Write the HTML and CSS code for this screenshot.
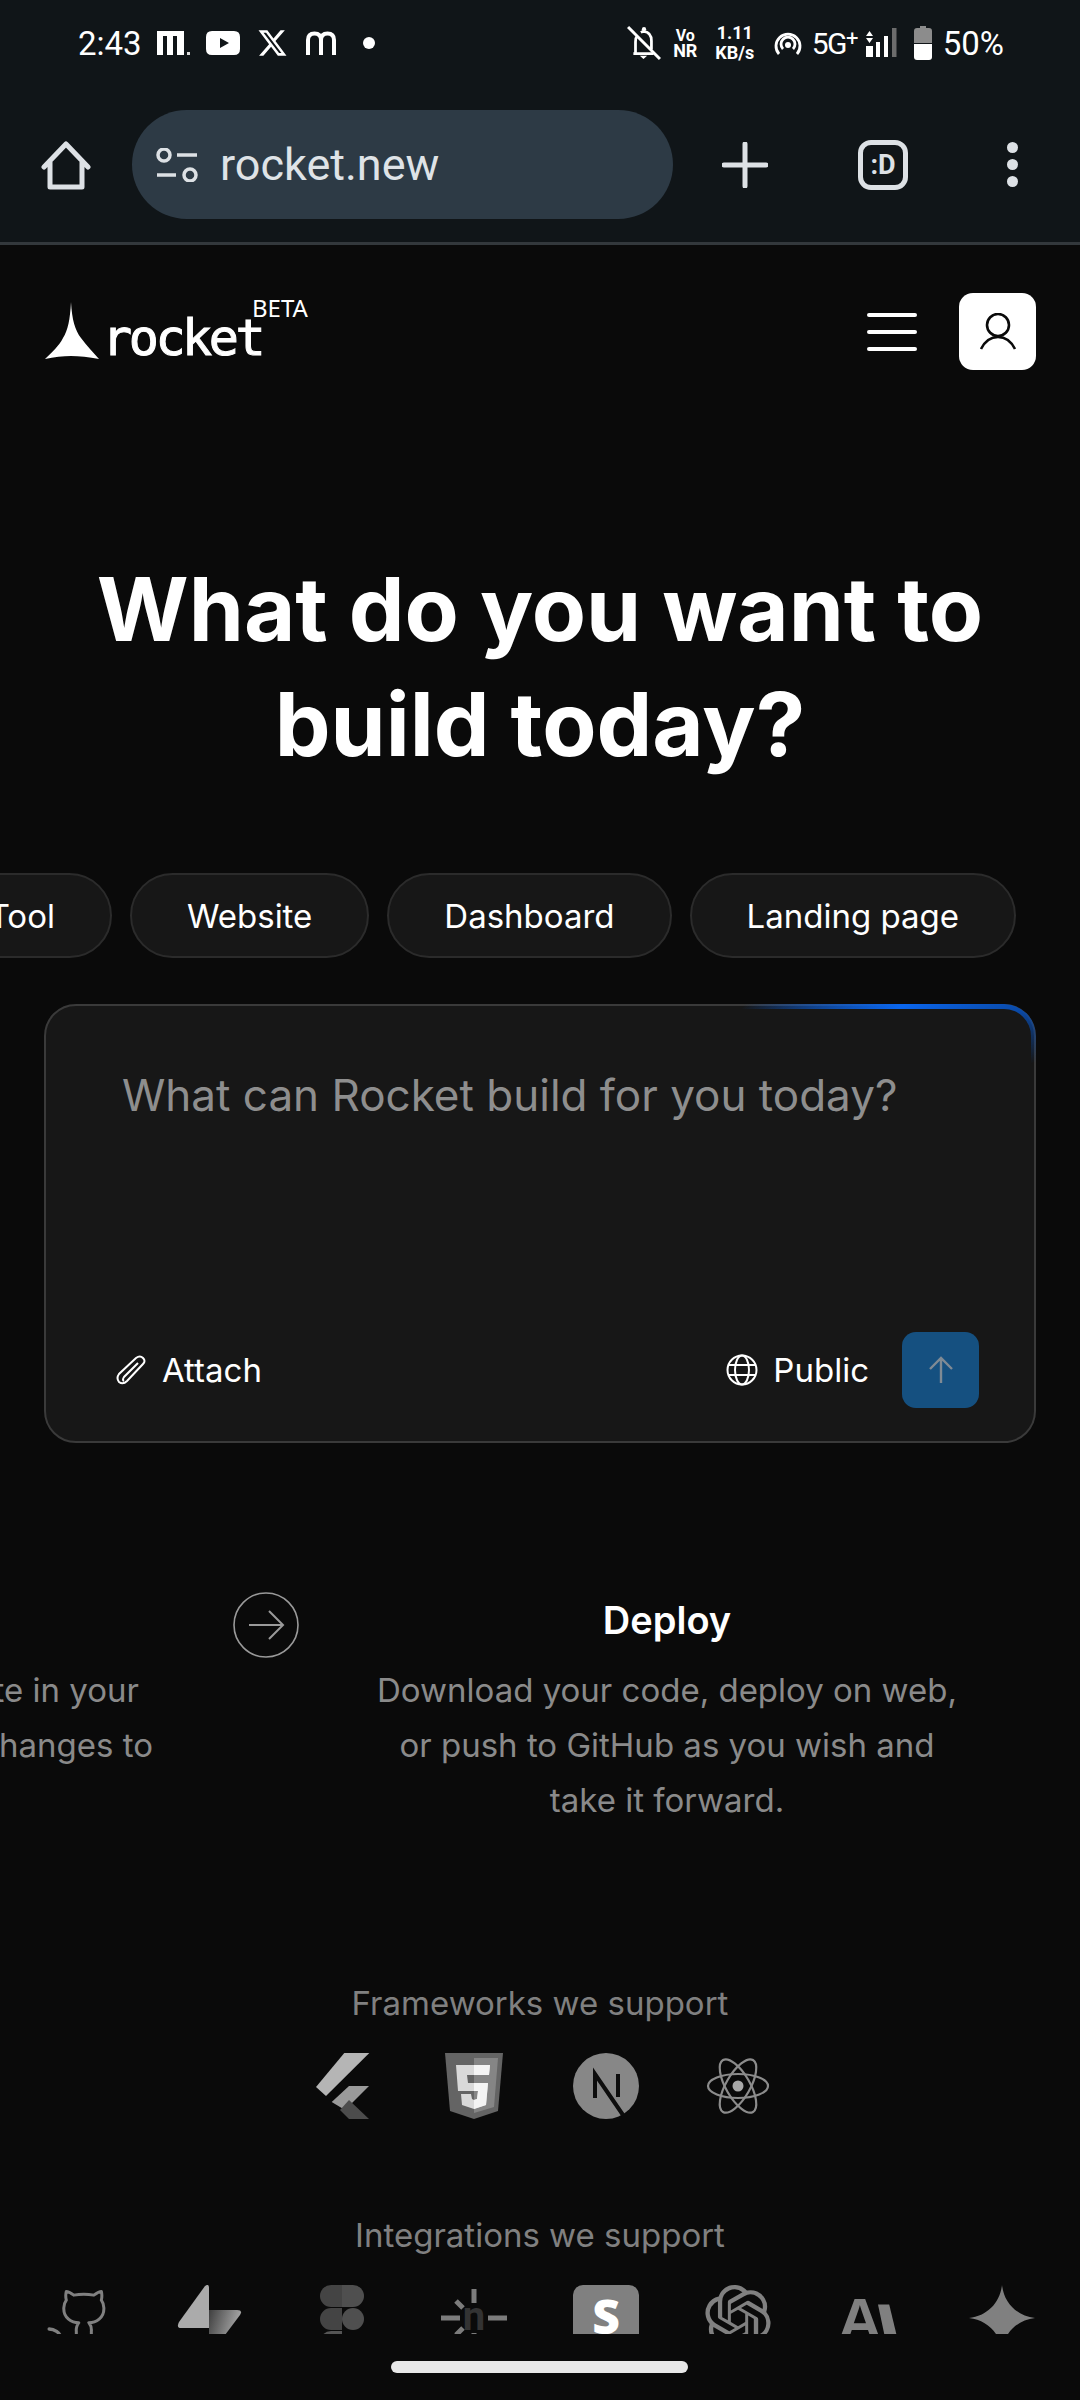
FILE: index.html
```html
<!DOCTYPE html>
<html lang="en">
<head>
<meta charset="utf-8">
<title>rocket.new</title>
<link rel="stylesheet" href="styles.css">
</head>
<body>
<div class="chrome">
  <div class="status">
    <div class="status-left">
      <span class="time">2:43</span>
      <svg class="si-m1" viewBox="0 0 34 24"><path d="M0 0H27V24H20V5H16V24H10V5H6V24H0Z" fill="#fff"/><rect x="30" y="21" width="3" height="3" fill="#ddd"/></svg>
      <svg class="si-yt" viewBox="0 0 34 24"><path fill-rule="evenodd" d="M6 0H28Q34 0 34 6V18Q34 24 28 24H6Q0 24 0 18V6Q0 0 6 0ZM14 7V17L23 12Z" fill="#fff"/></svg>
      <svg class="si-x" viewBox="0 0 24 24"><path d="M18.901 1.153h3.68l-8.04 9.19L24 22.846h-7.406l-5.8-7.584-6.638 7.584H.474l8.6-9.83L0 1.154h7.594l5.243 6.932ZM17.61 20.644h2.039L6.486 3.24H4.298Z" fill="#fff"/></svg>
      <svg class="si-m2" viewBox="0 0 30 24"><path d="M2 24V9Q2 2.500 8.500 2.500T15 9V24M15 9Q15 2.500 21.500 2.500T28 9V24" fill="none" stroke="#fff" stroke-width="4"/></svg>
      <span class="dot"></span>
    </div>
    <div class="status-right">
      <svg class="si-bell" viewBox="0 0 32 32"><path d="M6 26H25M8 25V15Q8 11 10 9M13 6Q15 5 16 5Q23 6 23 14V22" fill="none" stroke="#fff" stroke-width="2.600"/><circle cx="16" cy="3" r="2" fill="#fff"/><path d="M12 28H19L15.500 31Z" fill="#fff"/><path d="M1 1L31 31" stroke="#fff" stroke-width="2.800"/></svg>
      <span class="volte"><span class="vo">Vo</span><span>NR</span></span>
      <span class="speed"><span>1.11</span><span>KB/s</span></span>
      <svg class="si-hot" viewBox="0 0 28 24"><path d="M5 23A12 12 0 1 1 23 23" fill="none" stroke="#fff" stroke-width="2.800"/><path d="M9 18A7 7 0 1 1 19 18" fill="none" stroke="#fff" stroke-width="2.800"/><circle cx="14" cy="14" r="3" fill="#fff"/></svg>
      <span class="net">5G<sup>+</sup></span>
      <svg class="si-sig" viewBox="0 0 32 30"><path d="M1 8L4.500 3L8 8ZM1 10L4.500 15L8 10Z" fill="#fff"/><rect x="1" y="18" width="7" height="11" fill="#fff"/><rect x="11" y="14" width="4" height="15" fill="#fff"/><rect x="19" y="8" width="4" height="21" fill="#fff"/><rect x="27" y="0" width="4.500" height="29" fill="#6c6c6c"/></svg>
      <svg class="si-bat" viewBox="0 0 18 34"><path d="M6 0H12V2H15Q18 2 18 5V17H0V5Q0 2 3 2H6Z" fill="#8c8c8c"/><path d="M0 18H18V31Q18 34 15 34H3Q0 34 0 31Z" fill="#fff"/></svg>
      <span class="pct">50%</span>
    </div>
  </div>
  <div class="toolbar">
    <svg class="ic-home" viewBox="0 0 50 50"><path d="M3 26L25 3L47 26M9 20V46H41V20" fill="none" stroke="#dde1e5" stroke-width="5" stroke-linejoin="round" stroke-linecap="round"/></svg>
    <div class="omnibox">
      <svg class="ic-tune" viewBox="0 0 42 34"><circle cx="8" cy="7" r="6" fill="none" stroke="#dde1e5" stroke-width="3.500"/><path d="M21 7H41M1 27H20" stroke="#dde1e5" stroke-width="3.500"/><circle cx="34" cy="27" r="6" fill="none" stroke="#dde1e5" stroke-width="3.500"/></svg>
      <span class="url">rocket.new</span>
    </div>
    <svg class="ic-plus" viewBox="0 0 46 46"><path d="M23 2V44M2 23H44" stroke="#dde1e5" stroke-width="5" stroke-linecap="round"/></svg>
    <div class="tabs"><span>:D</span></div>
    <div class="kebab"><i></i><i></i><i></i></div>
  </div>
</div>

<main class="page">
  <header class="site-head">
    <div class="logo">
      <svg class="logo-mark" viewBox="0 0 54 58"><path d="M26 0C27 18 30 28 36 36C42 44 48 50 54 57C44 55 34 54 26 54C18 54 9 55 0 57C7 50 14 44 18 36C23 28 25 18 26 0Z" fill="#fff"/></svg>
      <span class="logo-word">rocket</span>
      <span class="beta">BETA</span>
    </div>
    <div class="head-actions">
      <div class="burger"><i></i><i></i><i></i></div>
      <div class="avatar">
        <svg viewBox="0 0 38 38"><circle cx="19" cy="12" r="11" fill="none" stroke="#0a0a0a" stroke-width="2.600"/><path d="M2 36C6 28 12 24 19 24S32 28 36 36" fill="none" stroke="#0a0a0a" stroke-width="2.600"/></svg>
      </div>
    </div>
  </header>

  <h1 class="headline">What do you want to<br>build today?</h1>

  <div class="chips">
    <span class="chip">Tool</span>
    <span class="chip">Website</span>
    <span class="chip">Dashboard</span>
    <span class="chip">Landing page</span>
  </div>

  <section class="prompt">
    <p class="placeholder">What can Rocket build for you today?</p>
    <div class="prompt-foot">
      <div class="action">
        <svg class="ic-clip" viewBox="0 0 30 30"><path d="M27 9L11 26Q7 30 3 27Q0 23 3 19L20 3Q24 0 27 3Q30 6 27 9" fill="none" stroke="#fff" stroke-width="2"/><path d="M22 8L8 22Q6 25 8 26" fill="none" stroke="#fff" stroke-width="2"/></svg>
        <span>Attach</span>
      </div>
      <div class="foot-right">
        <div class="action action-public">
          <svg class="ic-globe" viewBox="0 0 32 32"><circle cx="16" cy="16" r="14.500" fill="none" stroke="#fff" stroke-width="2"/><ellipse cx="16" cy="16" rx="7" ry="14.500" fill="none" stroke="#fff" stroke-width="2"/><path d="M3 11H29M3 21H29" stroke="#fff" stroke-width="2"/></svg>
          <span>Public</span>
        </div>
        <div class="send">
          <svg viewBox="0 0 26 28"><path d="M13 27V2M2 13L13 2L24 13" fill="none" stroke="#7f8a94" stroke-width="2.400"/></svg>
        </div>
      </div>
    </div>
  </section>

  <section class="steps">
    <div class="step-prev">
      <span class="prev-line prev-first">te in your</span>
      <span class="prev-line">hanges to</span>
    </div>
    <div class="step-arrow">
      <svg viewBox="0 0 66 66"><circle cx="33" cy="33" r="32" fill="none" stroke="#9a9a9a" stroke-width="1.600"/><path d="M16 33H50M36 19L50 33L36 47" fill="none" stroke="#9a9a9a" stroke-width="2"/></svg>
    </div>
    <div class="step">
      <h2>Deploy</h2>
      <p>Download your code, deploy on web,<br>or push to GitHub as you wish and<br>take it forward.</p>
    </div>
  </section>

  <section class="support support-frameworks">
    <h3>Frameworks we support</h3>
    <div class="logos logos-fw">
      <svg viewBox="0 0 66 66"><path d="M35.300 0H60.300L17 43L7 34Z" fill="#b5b5b5"/><path d="M40 33H60L36 57L22.700 49Z" fill="#9a9a9a"/><path d="M31 57L40 47L60 66H40Z" fill="#4c4c4c"/></svg>
      <svg viewBox="0 0 66 66"><path d="M4 0H62L57 58L33 66L9 58Z" fill="#646464"/><path d="M33 5H57L53 54L33 60Z" fill="#858585"/><path d="M15 12H49L48 22H26L27 30H47L45 52L33 56L21 52L20 41H30L31 46L33 47L36 46L37 38H17Z" fill="#d9d9d9"/><path d="M33 12H49L48 22H33ZM33 30H47L45 52L33 56V47L36 46L37 38H33Z" fill="#f4f4f4"/></svg>
      <svg viewBox="0 0 66 66"><circle cx="33" cy="33" r="33" fill="#878787"/><path d="M22 45V21L50 62" fill="none" stroke="#0d0d0d" stroke-width="4"/><path d="M45 21V44" stroke="#0d0d0d" stroke-width="4"/></svg>
      <svg viewBox="0 0 66 66"><g fill="none" stroke="#8c8c8c" stroke-width="2.200"><ellipse cx="33" cy="33" rx="30" ry="12"/><ellipse cx="33" cy="33" rx="30" ry="12" transform="rotate(60 33 33)"/><ellipse cx="33" cy="33" rx="30" ry="12" transform="rotate(120 33 33)"/></g><circle cx="33" cy="33" r="5.500" fill="#a8a8a8"/></svg>
    </div>
  </section>

  <section class="support support-integrations">
    <h3>Integrations we support</h3>
    <div class="logos logos-int">
      <svg viewBox="0 0 24 24"><g fill="none" stroke="#808080" stroke-width="1.200" stroke-linecap="round" stroke-linejoin="round"><g transform="translate(3.200 .5) scale(.91)"><path d="M15 22v-4a4.800 4.800 0 0 0-1-3.500c3 0 6-2 6-5.500.08-1.250-.27-2.480-1-3.500.28-1.150.28-2.350 0-3.500 0 0-1 0-3 1.500-2.640-.5-5.360-.5-8 0C6 2 5 2 5 2c-.3 1.150-.3 2.350 0 3.500A5.403 5.403 0 0 0 4 9c0 3.500 3 5.500 6 5.500-.39.490-.68 1.050-.85 1.650-.17.6-.22 1.230-.15 1.850v4"/></g><path d="M6 20c-.3-3-3-4-4.500-4"/></g></svg>
      <svg viewBox="0 0 66 66"><defs><linearGradient id="sb" x1="0" y1="0" x2="1" y2="0.400"><stop offset="0" stop-color="#3f3f3f"/><stop offset="1" stop-color="#b0b0b0"/></linearGradient></defs><path d="M28 1Q32-2 32 3V43H4Q-1 43 2 37Z" fill="#ababab"/><path d="M32 25H60Q66 25 63 30L36 66H32Z" fill="url(#sb)"/></svg>
      <svg viewBox="0 0 66 66"><path d="M33 0H22A11 11 0 0 0 22 22H33Z" fill="#444"/><path d="M33 0H44A11 11 0 0 1 44 22H33Z" fill="#4f4f4f"/><path d="M33 23H22A11 11 0 0 0 22 45H33Z" fill="#444"/><circle cx="44" cy="34" r="11" fill="#4f4f4f"/><path d="M33 46H22A11 11 0 1 0 33 57Z" fill="#555"/></svg>
      <div class="spark">
        <svg viewBox="0 0 66 66"><path d="M33 4V18M0 33H19M47 33H66M15 16L22 23M15 50L22 43M33 48V62" stroke="#7c7c7c" stroke-width="5"/></svg>
        <span>n</span>
      </div>
      <div class="s-tile">S</div>
      <svg viewBox="0 0 24 24"><path d="M22.2819 9.8211a5.9847 5.9847 0 0 0-.5157-4.9108 6.0462 6.0462 0 0 0-6.5098-2.9A6.0651 6.0651 0 0 0 4.9807 4.1818a5.9847 5.9847 0 0 0-3.9977 2.9 6.0462 6.0462 0 0 0 .7427 7.0966 5.98 5.98 0 0 0 .511 4.9107 6.051 6.051 0 0 0 6.5146 2.9001A5.9847 5.9847 0 0 0 13.2599 24a6.0557 6.0557 0 0 0 5.7718-4.2058 5.9894 5.9894 0 0 0 3.9977-2.9001 6.0557 6.0557 0 0 0-.7475-7.0729zm-9.022 12.6081a4.4755 4.4755 0 0 1-2.8764-1.0408l.1419-.0804 4.7783-2.7582a.7948.7948 0 0 0 .3927-.6813v-6.7369l2.02 1.1686a.071.071 0 0 1 .038.052v5.5826a4.504 4.504 0 0 1-4.4945 4.4944zm-9.6607-4.1254a4.4708 4.4708 0 0 1-.5346-3.0137l.142.0852 4.783 2.7582a.7712.7712 0 0 0 .7806 0l5.8428-3.3685v2.3324a.0804.0804 0 0 1-.0332.0615L9.74 19.9502a4.4992 4.4992 0 0 1-6.1408-1.6464zM2.3408 7.8956a4.485 4.485 0 0 1 2.3655-1.9728V11.6a.7664.7664 0 0 0 .3879.6765l5.8144 3.3543-2.0201 1.1685a.0757.0757 0 0 1-.071 0l-4.8303-2.7865A4.504 4.504 0 0 1 2.3408 7.872zm16.5963 3.8558L13.1038 8.364 15.1192 7.2a.0757.0757 0 0 1 .071 0l4.8303 2.7913a4.4944 4.4944 0 0 1-.6765 8.1042v-5.6772a.79.79 0 0 0-.407-.667zm2.0107-3.0231l-.142-.0852-4.7735-2.7818a.7759.7759 0 0 0-.7854 0L9.409 9.2297V6.8974a.0662.0662 0 0 1 .0284-.0615l4.8303-2.7866a4.4992 4.4992 0 0 1 6.6802 4.66zM8.3065 12.863l-2.02-1.1638a.0804.0804 0 0 1-.038-.0567V6.0742a4.4992 4.4992 0 0 1 7.3757-3.4537l-.142.0805L8.704 5.459a.7948.7948 0 0 0-.3927.6813zm1.0976-2.3654l2.602-1.4998 2.6069 1.4998v2.9994l-2.5974 1.4997-2.6067-1.4997Z" fill="#808080"/></svg>
      <div class="anth">
        <span>A</span>
        <svg viewBox="0 0 30 66"><path d="M0 0H14L30 66H14Z" fill="#808080"/></svg>
      </div>
      <svg viewBox="0 0 66 66"><path d="M33 0C35 18 48 31 66 33C48 35 35 48 33 66C31 48 18 35 0 33C18 31 31 18 33 0Z" fill="#808080"/></svg>
    </div>
  </section>

  <div class="home-bar"></div>
</main>
</body>
</html>
```

FILE: styles.css
```css
* { box-sizing: border-box; }
html, body { margin: 0; padding: 0; }
body {
  width: 1080px;
  height: 2400px;
  overflow: hidden;
  background: #0a0a0a;
  font-family: "Inter", "Liberation Sans", sans-serif;
  color: #fff;
}
svg { display: block; flex: none; }

/* system + browser chrome */
.chrome { background: #101518; border-bottom: 3px solid #33383c; height: 245px; }
.status {
  height: 86px;
  display: flex;
  align-items: center;
  justify-content: space-between;
  padding: 0 76px 0 78px;
  font-family: "Roboto", sans-serif;
}
.status-left, .status-right { display: flex; align-items: center; }
.time { font-size: 33px; margin-right: 15px; }
.si-m1 { width: 34px; height: 24px; margin-right: 15px; }
.si-yt { width: 34px; height: 24px; margin-right: 18px; }
.si-x { width: 29px; height: 28px; margin-right: 19px; }
.si-m2 { width: 30px; height: 24px; margin-right: 27px; }
.dot { width: 12px; height: 12px; border-radius: 50%; background: #fff; }
.si-bell { width: 34px; height: 34px; margin-right: 14px; }
.volte { display: flex; flex-direction: column; align-items: center; width: 21px; font-size: 18px; line-height: 15px; font-weight: 700; margin-right: 18px; }
.vo { font-size: 16px; }
.speed { display: flex; flex-direction: column; align-items: center; width: 42px; font-size: 18px; line-height: 20px; font-weight: 700; margin-right: 18px; white-space: nowrap; }
.si-hot { width: 28px; height: 24px; margin-right: 10px; }
.net { font-size: 30px; letter-spacing: -1.500px; width: 46px; margin-right: 7px; white-space: nowrap; display: block; }
.net sup { font-size: 22px; line-height: 0; vertical-align: 8px; }
.si-sig { width: 32px; height: 30px; margin-right: 17px; }
.si-bat { width: 18px; height: 34px; margin-right: 11px; }
.pct { font-size: 33px; }

.toolbar { height: 156px; padding: 24px 0 0 41px; display: flex; align-items: flex-start; }
.ic-home { width: 50px; height: 50px; margin: 31px 41px 0 0; }
.omnibox {
  width: 541px;
  height: 109px;
  border-radius: 55px;
  background: #2d3a45;
  display: flex;
  align-items: center;
  padding-left: 24px;
}
.ic-tune { width: 42px; height: 34px; margin-right: 22px; }
.url { font-family: "Roboto", sans-serif; font-size: 45px; color: #dfe3e7; }
.ic-plus { width: 46px; height: 46px; margin: 32px 0 0 49px; }
.tabs {
  width: 50px; height: 50px; margin: 30px 0 0 90px;
  border: 5px solid #dde1e5; border-radius: 13px;
  display: flex; align-items: center; justify-content: center;
  font-family: "Roboto", sans-serif; font-weight: 700; font-size: 27px; color: #dde1e5;
}
.kebab { display: flex; flex-direction: column; gap: 6px; margin: 32px 0 0 99px; }
.kebab i { width: 11px; height: 11px; border-radius: 50%; background: #dde1e5; }

/* header */
.page { height: 2155px; position: relative; overflow: hidden; }
.site-head { display: flex; justify-content: space-between; align-items: flex-start; padding: 48px 44px 0 45px; }
.logo { position: relative; display: flex; align-items: flex-end; height: 67px; }
.logo-mark { width: 54px; height: 58px; margin-right: 3px; }
.logo-word { font-family: "DejaVu Sans Mono", monospace; font-weight: 400; -webkit-text-stroke: 1px #fff; font-size: 50px; line-height: 50px; letter-spacing: -3.400px; height: 50px; margin-bottom: -3px; }
.beta { position: absolute; left: 207px; top: 2px; font-family: "Noto Sans", sans-serif; font-size: 24px; line-height: 26px; }
.head-actions { display: flex; align-items: center; gap: 42px; }
.burger { display: flex; flex-direction: column; gap: 13px; }
.burger i { width: 50px; height: 4px; border-radius: 2px; background: #fff; }
.avatar { width: 77px; height: 77px; border-radius: 14px; background: #fff; display: flex; align-items: center; justify-content: center; }
.avatar svg { width: 38px; height: 38px; }

.headline { margin: 181px 0 0; text-align: center; font-size: 88.600px; line-height: 115px; font-weight: 700; }

/* chips */
.chips { display: flex; justify-content: flex-end; gap: 18px; padding-right: 64px; margin-top: 92px; }
.chip {
  flex: none;
  height: 85px;
  padding: 0 55px;
  display: flex; align-items: center;
  border: 2px solid #2b2b2b;
  border-radius: 43px;
  background: #171717;
  font-size: 33px;
}

/* prompt */
.prompt {
  position: relative;
  margin: 46px 44px 0;
  height: 439px;
  border: 2px solid #3a3a3a;
  border-radius: 32px;
  background: #171717;
  padding: 0 55px 33px 70px;
  display: flex;
  flex-direction: column;
  justify-content: space-between;
}
.prompt::before {
  content: "";
  position: absolute;
  inset: -2px;
  padding: 5px;
  border-radius: 32px;
  background: conic-gradient(from 43deg at 50% 50%, transparent 0deg, #0a66ee 16deg, #0a4aa8 23deg, transparent 29deg, transparent 360deg);
  -webkit-mask: linear-gradient(#000 0 0) content-box, linear-gradient(#000 0 0);
  -webkit-mask-composite: xor;
  mask-composite: exclude;
}
.placeholder { margin: 63px 0 0 6px; font-size: 44px; line-height: 52px; color: #8e8e8e; }
.prompt-foot { display: flex; justify-content: space-between; align-items: center; }
.action { display: flex; align-items: center; font-size: 33px; }
.ic-clip { width: 30px; height: 30px; margin-right: 16px; }
.foot-right { display: flex; align-items: center; gap: 33px; }
.ic-globe { width: 32px; height: 32px; margin-right: 15px; }
.send { width: 77px; height: 76px; border-radius: 14px; background: #155080; display: flex; align-items: center; justify-content: center; }
.send svg { width: 26px; height: 28px; }

/* steps */
.steps { display: flex; align-items: flex-start; margin-top: 149px; }
.step-prev { flex: none; width: 153px; margin-top: 71px; display: flex; flex-direction: column; align-items: flex-end; overflow: hidden; font-size: 33px; line-height: 55px; color: #8a8a8a; }
.prev-line { white-space: nowrap; }
.prev-first { margin-right: 14px; }
.step-arrow { flex: none; margin: 0 0 0 80px; width: 66px; height: 66px; }
.step-arrow svg { width: 66px; height: 66px; }
.step { flex: none; width: 600px; margin-left: 68px; text-align: center; }
.step h2 { margin: 0; font-size: 38px; line-height: 56px; font-weight: 600; }
.step p { margin: 15px 0 0; font-size: 33px; line-height: 55px; color: #8a8a8a; }

/* supports */
.support h3 { margin: 0; text-align: center; font-size: 33px; line-height: 40px; font-weight: 400; color: #808080; }
.support-frameworks { margin-top: 155px; }
.support-integrations { margin-top: 96px; }
.logos { display: flex; justify-content: center; }
.logos-fw { gap: 66px; margin-top: 30px; }
.logos-fw svg { width: 66px; height: 66px; }
.logos-int { gap: 66px; margin-top: 30px; height: 49px; overflow: hidden; }
.logos-int > * { flex: none; width: 66px; height: 66px; }
.spark { position: relative; }
.spark svg { width: 66px; height: 66px; }
.spark span { position: absolute; left: 0; right: 0; top: 8px; text-align: center; font-family: "Roboto", sans-serif; font-weight: 700; font-size: 40px; line-height: 48px; color: #333; }
.s-tile { background: #808080; border-radius: 10px; padding-top: 1px; text-align: center; font-family: "Open Sans", sans-serif; font-weight: 800; font-size: 48px; line-height: 60px; color: #fff; }
.anth { display: flex; justify-content: center; align-items: flex-start; color: #808080; }
.anth span { font-family: "Liberation Sans", sans-serif; font-weight: 700; font-size: 62px; line-height: 66px; margin-top: 2px; }
.anth svg { width: 24px; height: 66px; margin: 13px 0 0 -4px; }

.home-bar { position: absolute; left: 391px; top: 2116px; width: 297px; height: 12px; border-radius: 6px; background: #e8e8e8; }
```
